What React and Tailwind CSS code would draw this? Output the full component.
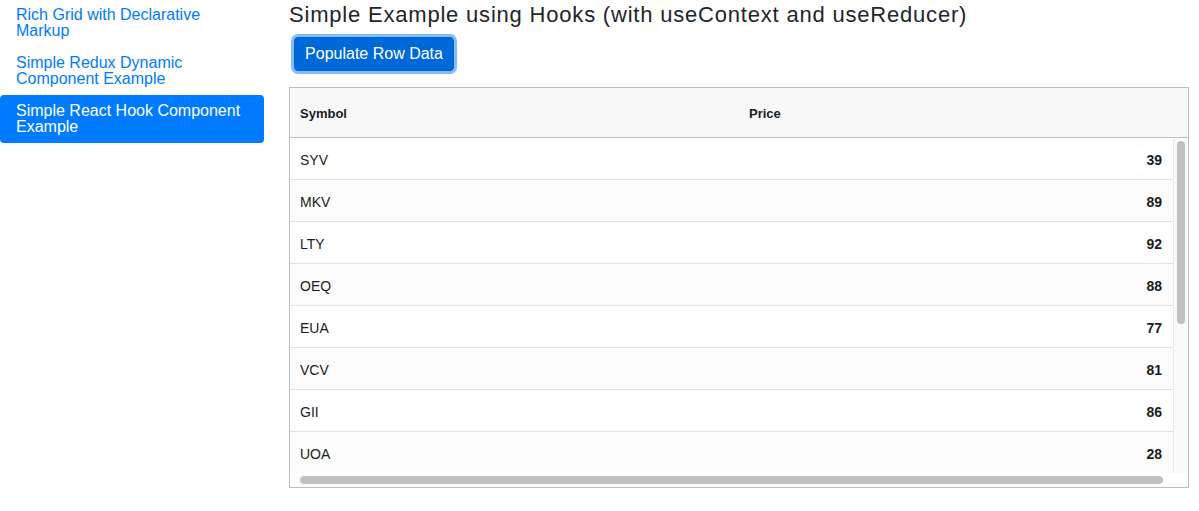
const rows = [
  { symbol: 'SYV', price: 39 },
  { symbol: 'MKV', price: 89 },
  { symbol: 'LTY', price: 92 },
  { symbol: 'OEQ', price: 88 },
  { symbol: 'EUA', price: 77 },
  { symbol: 'VCV', price: 81 },
  { symbol: 'GII', price: 86 },
  { symbol: 'UOA', price: 28 },
]

const links = [
  { label: ['Rich Grid with Declarative', 'Markup'] },
  { label: ['Simple Redux Dynamic', 'Component Example'] },
  { label: ['Simple React Hook Component', 'Example'], active: true },
]

export default function App() {
  return (
    <div className="flex h-[511px] w-[1199px] overflow-hidden bg-white font-['Liberation_Sans',Arial,sans-serif] text-[#212529]">
      <nav className="flex w-[264px] shrink-0 flex-col">
        {links.map((link, i) => (
          <a
            key={i}
            className={`block h-[48px] rounded px-4 pt-[8px] text-[16px] leading-[16px] ${link.active ? 'bg-[#007bff] text-white' : 'text-[#007bff]'} ${i === 0 ? '-mt-px' : ''}`}
          >
            {link.label[0]}
            <br />
            {link.label[1]}
          </a>
        ))}
      </nav>

      <main className="ml-[25px] flex w-[900px] flex-col">
        <h5 className="mt-[1px] text-[22px] leading-[28px] font-medium tracking-[0.8px]">Simple Example using Hooks (with useContext and useReducer)</h5>
        <div className="mt-[8px] ml-[5px]">
          <button className="h-[34px] w-[160px] rounded border border-[#0062cc] bg-[#0069d9] text-[16px] leading-[20px] text-white ring-[3px] ring-[#84bcf9]">
            Populate Row Data
          </button>
        </div>

        <div className="mt-[16px] flex h-[401px] flex-col border border-[#babfc7] text-[14px] text-[#181d1f]">
          <div className="flex h-[50px] shrink-0 items-center border-b border-[#babfc7] bg-[#f8f8f8] pt-[2px] text-[13px] font-bold">
            <div className="w-[449px] pl-[10px]">Symbol</div>
            <div className="pl-[10px]">Price</div>
          </div>

          <div className="flex min-h-0 flex-1">
            <div className="flex min-w-0 flex-1 flex-col">
              <div className="min-h-0 flex-1 overflow-hidden">
                {rows.map((row, i) => (
                  <div
                    key={row.symbol}
                    className={`flex h-[42px] items-center border-b border-[#dde2eb] pt-[3px] ${i % 2 ? 'bg-[#fcfcfc]' : 'bg-white'}`}
                  >
                    <div className="w-[449px] pl-[10px]">{row.symbol}</div>
                    <div className="flex-1 pr-[11px] text-right font-bold">{row.price}</div>
                  </div>
                ))}
              </div>
              <div className="flex h-[14px] shrink-0 items-center pl-[10px] pr-[10px]">
                <div className="h-[8px] w-full rounded-full bg-[#c1c1c1]" />
              </div>
            </div>
            <div className="flex w-[15px] shrink-0 flex-col">
              <div className="flex-1 border-l border-[#e8e8e8] bg-[#fafafa] pt-[3px] pl-[3px]">
                <div className="h-[183px] w-[8px] rounded-full bg-[#c1c1c1]" />
              </div>
              <div className="h-[14px] bg-white" />
            </div>
          </div>
        </div>
      </main>
    </div>
  )
}
